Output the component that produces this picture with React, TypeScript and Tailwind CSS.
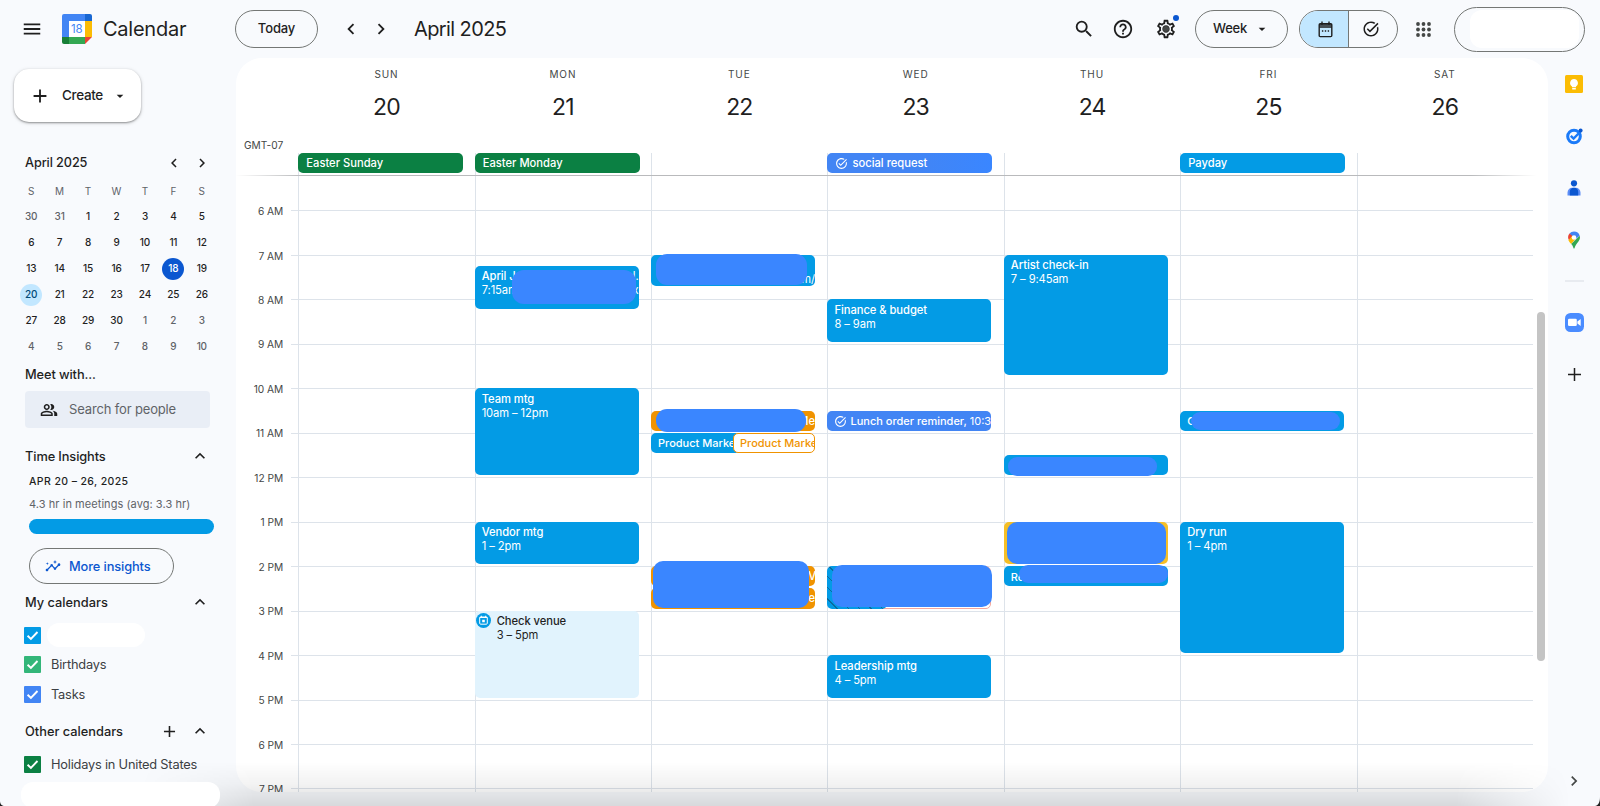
import { clsx } from 'clsx';
import type { ReactNode } from 'react';
import {
  MdAdd,
  MdArrowDropDown,
  MdChevronLeft,
  MdChevronRight,
  MdExpandLess,
  MdHelpOutline,
  MdInsights,
  MdMenu,
  MdOutlinePeopleAlt,
  MdOutlineSettings,
  MdSearch,
  MdTaskAlt,
} from 'react-icons/md';

const HOUR_H = 44.47;
const FIRST_LINE = 34.5; // offset of the 6 AM line inside the scroll area

const DAYS = [
  ['SUN', 20],
  ['MON', 21],
  ['TUE', 22],
  ['WED', 23],
  ['THU', 24],
  ['FRI', 25],
  ['SAT', 26],
] as const;

const HOURS = ['6 AM', '7 AM', '8 AM', '9 AM', '10 AM', '11 AM', '12 PM', '1 PM', '2 PM', '3 PM', '4 PM', '5 PM', '6 PM', '7 PM'];

const MINI_DAYS = [
  30, 31, 1, 2, 3, 4, 5,
  6, 7, 8, 9, 10, 11, 12,
  13, 14, 15, 16, 17, 18, 19,
  20, 21, 22, 23, 24, 25, 26,
  27, 28, 29, 30, 1, 2, 3,
  4, 5, 6, 7, 8, 9, 10,
];

interface CalEvent {
  day: number;
  start: number;
  end: number;
  title?: string;
  time?: string;
  color?: string;
  left?: number;
  width?: number;
  short?: boolean;
  icon?: 'task' | 'venue';
  tail?: ReactNode;
  // x, y, w, h of the block that hides the private part
  cover?: [number, number, number, number];
  coverRadius?: string;
}

const EVENTS: CalEvent[] = [
  {
    day: 1, start: 7.25, end: 8.25, title: 'April J', time: '7:15am', cover: [37.5, 3.5, 124, 34.5], coverRadius: 'rounded-[12px]',
    tail: <div className="absolute right-0 top-[3px] text-right leading-[14px]"><div>l.</div><div>x</div></div>,
  },
  { day: 1, start: 10, end: 12, title: 'Team mtg', time: '10am – 12pm' },
  { day: 1, start: 13, end: 14, title: 'Vendor mtg', time: '1 – 2pm' },
  { day: 1, start: 15, end: 17, title: 'Check venue', time: '3 – 5pm', color: 'bg-[#e1f3fd] text-[#1f1f1f]', icon: 'venue' },
  {
    day: 2, start: 7, end: 7.75, cover: [4.5, -1, 151, 31], coverRadius: 'rounded-[11px]',
    tail: <div className="absolute right-0 bottom-0 leading-[14px]">m/</div>,
  },
  {
    day: 2, start: 10.5, end: 11, color: 'bg-[#f09300] text-white', cover: [5, -1.5, 150, 22.5], coverRadius: 'rounded-[11px]',
    tail: <div className="absolute right-0 top-[3px] font-medium leading-[14px]">Me</div>,
  },
  { day: 2, start: 11, end: 11.5, title: 'Product Marke', width: 90, short: true },
  { day: 2, start: 11, end: 11.5, title: 'Product Marke', left: 82, width: 82, short: true, color: 'bg-white text-[#f09300] border border-[#f09300]' },
  {
    day: 2, start: 14, end: 14.5, color: 'bg-[#f09300] text-white',
    tail: <div className="absolute -right-px top-[3px] font-medium leading-[14px]">V</div>,
  },
  {
    day: 2, start: 14.5, end: 15, color: 'bg-[#f09300] text-white', cover: [1.5, -27.5, 156.5, 47], coverRadius: 'rounded-[10px]',
    tail: <div className="absolute right-0 top-[3px] font-medium leading-[14px]">Me</div>,
  },
  { day: 3, start: 8, end: 9, title: 'Finance & budget', time: '8 – 9am' },
  { day: 3, start: 10.5, end: 11, title: 'Lunch order reminder,', time: '10:3', short: true, icon: 'task', color: 'bg-[#4285f4] text-white' },
  { day: 3, start: 14, end: 15, left: 20, width: 143.8, color: 'bg-white border border-[#f4a79d]' },
  {
    day: 3, start: 14, end: 15, width: 60, cover: [5, -1.5, 159.5, 42], coverRadius: 'rounded-[10px]',
    color: 'bg-[repeating-linear-gradient(45deg,#039be5_0px,#039be5_7px,#0a6aa0_7px,#0a6aa0_8px)]',
  },
  { day: 3, start: 16, end: 17, title: 'Leadership mtg', time: '4 – 5pm' },
  { day: 4, start: 7, end: 9.75, title: 'Artist check-in', time: '7 – 9:45am' },
  { day: 4, start: 11.5, end: 12, cover: [4, 2, 149.5, 18.5], coverRadius: 'rounded-[9px]' },
  { day: 4, start: 13, end: 14, color: 'bg-[#f6bf26]', cover: [3.5, 0, 159, 42], coverRadius: 'rounded-[10px]' },
  { day: 4, start: 14, end: 14.5, title: 'Re', short: true, cover: [15.5, -1.5, 148.5, 18.5], coverRadius: 'rounded-[9px]' },
  { day: 5, start: 10.5, end: 11, title: 'C', short: true, cover: [10.5, 1.5, 149, 17.5], coverRadius: 'rounded-[9px]' },
  { day: 5, start: 13, end: 16, title: 'Dry run', time: '1 – 4pm' },
];

function EventBlock({ ev }: { ev: CalEvent }) {
  return (
    <div
      className="absolute"
      style={{
        top: FIRST_LINE + (ev.start - 6) * HOUR_H,
        height: (ev.end - ev.start) * HOUR_H - 2,
        left: ev.left ?? 0,
        width: ev.width ?? 164,
      }}
    >
      <div className={clsx('relative h-full overflow-hidden rounded-[5px] text-[11.2px] whitespace-nowrap', ev.color ?? 'bg-[#039be5] text-white')}>
        {ev.short ? (
          <div className={clsx('flex h-full items-center gap-[3px] pt-px text-[11px]', ev.left ? 'pl-[6px]' : 'pl-[7px]')}>
            {ev.icon === 'task' && <MdTaskAlt className="size-[13px] shrink-0" />}
            <span className="font-medium">{ev.title}</span>
            {ev.time && <span>{ev.time}</span>}
          </div>
        ) : (
          <div className={clsx('pt-[3.4px] leading-[14px]', ev.icon ? 'pl-[22px]' : 'pl-[7px]')}>
            <div className="font-medium tracking-[-0.05px]">{ev.title}</div>
            <div className="tracking-[-0.1px]">{ev.time}</div>
          </div>
        )}
        {ev.icon === 'venue' && (
          <svg viewBox="0 0 15 15" className="absolute left-[1.5px] top-[2px] size-[15px]">
            <circle cx="7.5" cy="7.5" r="7.5" fill="#039be5" />
            <rect x="3.7" y="4" width="7.6" height="7.2" rx="1" fill="none" stroke="#fff" />
            <path d="M3.7 4.5h7.6M5.3 2.7v1.6M9.7 2.7v1.6" stroke="#fff" />
            <path d="M6.2 6.7h2.6v2.6H6.2z" fill="#fff" />
          </svg>
        )}
        {ev.tail}
      </div>
      {ev.cover && (
        <div
          className={clsx('absolute bg-[#3a86ff]', ev.coverRadius)}
          style={{ left: ev.cover[0], top: ev.cover[1], width: ev.cover[2], height: ev.cover[3] }}
        />
      )}
    </div>
  );
}

function Logo() {
  return (
    <svg viewBox="0 0 30 30" className="ml-[19px] size-[30px]">
      <path d="M2 0h21v7H7v16H0V2a2 2 0 0 1 2-2z" fill="#4285f4" />
      <path d="M23 0h5a2 2 0 0 1 2 2v5h-7z" fill="#1967d2" />
      <path d="M23 7h7v16h-7z" fill="#fbbc04" />
      <path d="M7 23h16v7H7z" fill="#34a853" />
      <path d="M0 23h7v7H2a2 2 0 0 1-2-2z" fill="#188038" />
      <path d="M23 23h7l-7 7z" fill="#ea4335" />
      <path d="M7 7h16v16H7z" fill="#fff" />
      <text x="14.8" y="19.3" textAnchor="middle" fontSize="11.5" fill="#4285f4">18</text>
    </svg>
  );
}

function Header() {
  return (
    <header className="flex h-[58px] shrink-0 items-center pr-[15px] text-[#1f1f1f]">
      <MdMenu className="ml-[21px] size-[22px]" />
      <Logo />
      <span className="ml-[11px] w-[132px] text-[20px] tracking-[-0.25px]">Calendar</span>
      <button className="h-[38px] w-[83px] rounded-full border border-[#747775] text-[13px] font-medium tracking-[-0.15px]">Today</button>
      <MdChevronLeft className="ml-[22px] size-[22px]" />
      <MdChevronRight className="ml-[8px] size-[22px]" />
      <span className="ml-[22px] text-[20px] tracking-[-0.6px]">April 2025</span>
      <div className="ml-auto flex items-center">
        <MdSearch className="size-[22px]" />
        <MdHelpOutline className="ml-[17px] size-[22px]" />
        <div className="relative ml-[21px]">
          <MdOutlineSettings className="size-[22px]" />
          <span className="absolute left-[8px] top-[8px] size-[6px] rounded-full bg-[#444746]" />
          <span className="absolute -top-[3px] left-[18px] size-[6px] rounded-full bg-[#0b57d0]" />
        </div>
        <button className="ml-[18px] flex h-[38px] w-[93px] items-center rounded-full border border-[#747775] pl-[17px] text-[13px] font-medium tracking-[-0.25px]">
          <span className="w-[41px] text-left">Week</span>
          <MdArrowDropDown className="size-[16px]" />
        </button>
        <div className="ml-[11px] flex h-[38px] w-[99px] overflow-hidden rounded-full border border-[#747775]">
          <div className="flex w-[49px] items-center justify-center border-r border-[#747775] bg-[#c2e7ff] pl-[3px]">
            <svg viewBox="0 0 15 17" className="h-[17px] w-[15px]" fill="none" stroke="#1f1f1f" strokeWidth="1.4">
              <rect x="1.2" y="2.8" width="12.6" height="12.8" rx="1" />
              <path d="M1.2 4h12.6M1.2 6h12.6M4 .5v3M11 .5v3" />
              <path d="M3.9 10h1.4M6.8 10h1.4M9.7 10h1.4" />
            </svg>
          </div>
          <div className="flex flex-1 items-center justify-center pr-[4px]">
            <MdTaskAlt className="size-[18px]" />
          </div>
        </div>
        <svg viewBox="0 0 15 15" className="ml-[18px] size-[15px]" fill="#444746">
          {[2, 7.5, 13].map(y => [2, 7.5, 13].map(x => <circle key={`${x}-${y}`} cx={x} cy={y} r="1.9" />))}
        </svg>
        <div className="ml-[23px] flex h-[45px] w-[131px] items-center justify-end rounded-full border border-[#747775] pr-[5px]">
          <div className="h-[38px] w-[109px] rounded-[12px] bg-white" />
        </div>
      </div>
    </header>
  );
}

function MiniCalendar() {
  return (
    <div>
      <div className="flex h-[28px] items-center pl-[25px] text-[12.7px] font-medium tracking-[-0.1px]">
        <span className="w-[140px]">April 2025</span>
        <MdChevronLeft className="size-[18px]" />
        <MdChevronRight className="ml-[10px] size-[18px]" />
      </div>
      <div className="ml-[17px] mt-[1px] grid w-[199px] grid-cols-7 text-center text-[10px]">
        {['S', 'M', 'T', 'W', 'T', 'F', 'S'].map((d, i) => (
          <span key={i} className="flex h-[26px] items-center justify-center text-[#5f6368]">{d}</span>
        ))}
        {MINI_DAYS.map((d, i) => (
          <span key={i} className="flex h-[25.9px] items-center justify-center">
            <span
              className={clsx(
                'flex size-[22px] items-center justify-center rounded-full font-medium tracking-[-0.2px]',
                i === 19 && 'bg-[#0b57d0] text-white',
                i === 21 && 'bg-[#c2e7ff] text-[#004a77]',
                (i < 2 || i > 31) && 'text-[#5f6368]',
              )}
            >
              {d}
            </span>
          </span>
        ))}
      </div>
    </div>
  );
}

function Check({ color, children }: { color: string; children: ReactNode }) {
  return (
    <div className="flex h-[29.6px] items-center pl-[24px] text-[12.8px] tracking-[-0.2px] text-[#3c4043]">
      <span className={clsx('flex size-[17px] items-center justify-center rounded-[1px]', color)}>
        <svg viewBox="0 0 17 17" className="size-[17px]">
          <path d="M3.6 8.7l3.3 3.2 6.6-6.9" fill="none" stroke="#fff" strokeWidth="1.9" />
        </svg>
      </span>
      {children}
    </div>
  );
}

function Sidebar() {
  return (
    <aside className="flex w-[236px] shrink-0 flex-col text-[#1f1f1f]">
      <button className="ml-[14px] mt-[11px] flex h-[53px] w-[127px] shrink-0 items-center rounded-[15px] bg-white pl-[15px] text-[13.5px] font-medium shadow-[0_1px_2px_rgba(0,0,0,0.35),0_1px_4px_rgba(0,0,0,0.15)]">
        <MdAdd className="size-[22px]" />
        <span className="ml-[11px] w-[48px] text-left tracking-[-0.35px]">Create</span>
        <MdArrowDropDown className="ml-[2px] size-[16px]" />
      </button>
      <div className="mt-[27px]"><MiniCalendar /></div>
      <div className="mt-[7px] pl-[25px] text-[12.8px] font-medium leading-[17px] tracking-[-0.1px]">Meet with...</div>
      <div className="ml-[25px] mt-[8px] flex h-[37px] w-[185px] shrink-0 items-center rounded-[4px] bg-[#e9eef6] pl-[15px] text-[13px] tracking-[-0.15px] text-[#5f6368]">
        <MdOutlinePeopleAlt className="mr-[11px] size-[18px] text-[#1f1f1f]" />
        Search for people
      </div>
      <div className="mt-[18px] flex h-[20px] items-center justify-between pl-[25px] pr-[26px] text-[12.8px] font-medium tracking-[-0.1px]">
        Time Insights
        <MdExpandLess className="size-[20px]" />
      </div>
      <div className="ml-[29px] mt-[8px] text-[10.5px] font-medium leading-[16px] tracking-[0.4px]">APR 20 – 26, 2025</div>
      <div className="ml-[29px] mt-[6px] text-[11px] leading-[16px] tracking-[0.06px] text-[#5f6368]">4.3 hr in meetings (avg: 3.3 hr)</div>
      <div className="ml-[29px] mt-[7px] h-[15px] w-[185px] shrink-0 rounded-full bg-[#039be5]" />
      <button className="ml-[29px] mt-[14px] flex h-[36px] w-[145px] shrink-0 items-center rounded-full border border-[#747775] pl-[15px] text-[12.8px] font-medium tracking-[-0.1px] text-[#0b57d0]">
        <MdInsights className="mr-[8px] size-[16px]" />
        More insights
      </button>
      <div className="mb-[12px] mt-[8px] flex h-[20px] items-center justify-between pl-[25px] pr-[26px] text-[12.8px] font-medium">
        My calendars
        <MdExpandLess className="size-[20px]" />
      </div>
      <div className="-mt-[4px]">
        <Check color="bg-[#039be5]"><span className="ml-[6px] h-[24px] w-[98px] rounded-full bg-white" /></Check>
        <Check color="bg-[#33b679]"><span className="ml-[10px]">Birthdays</span></Check>
        <Check color="bg-[#4285f4]"><span className="ml-[10px]">Tasks</span></Check>
      </div>
      <div className="mt-[12px] flex h-[20px] items-center pl-[25px] pr-[26px] text-[12.8px] font-medium">
        <span className="mr-auto">Other calendars</span>
        <MdAdd className="mr-[11px] size-[19px]" />
        <MdExpandLess className="size-[20px]" />
      </div>
      <div className="mt-[9px]">
        <Check color="bg-[#0b8043]"><span className="ml-[10px]">Holidays in United States</span></Check>
      </div>
      <div className="relative z-20 ml-[21px] mt-[2px] h-[26px] w-[199px] shrink-0 rounded-[12px] bg-white" />
    </aside>
  );
}

function AllDayChip({ className, children }: { className: string; children: ReactNode }) {
  return (
    <div className={clsx('relative z-10 -ml-px flex h-[20px] w-[165px] items-center rounded-[5px] pl-[8px] text-[11.2px] font-medium text-white', className)}>
      {children}
    </div>
  );
}

function WeekGrid() {
  return (
    <main className="relative flex h-[734px] w-[1312px] shrink-0 flex-col overflow-hidden rounded-[26px] bg-white">
      <div className="flex h-[95px] shrink-0 pr-[15px]">
        <div className="flex w-[62.3px] items-end justify-end pr-[15px] text-[10.2px] leading-[15px] text-[#444746]">GMT-07</div>
        <div className="grid flex-1 grid-cols-7">
          {DAYS.map(([name, num]) => (
            <div key={name} className="flex flex-col items-center">
              <span className="mt-[8.4px] text-[10px] leading-[16px] tracking-[0.9px] text-[#444746]">{name}</span>
              <span className="mt-[9px] text-[23px] leading-[32px] tracking-[-0.9px] text-[#1f1f1f]">{num}</span>
            </div>
          ))}
        </div>
      </div>
      <div className="flex h-[22px] shrink-0 pr-[15px]">
        <div className="w-[62.3px]" />
        <div className="grid flex-1 grid-cols-7">
          <div className="border-l border-[#dde3ea]"><AllDayChip className="bg-[#0b8043]">Easter Sunday</AllDayChip></div>
          <div className="border-l border-[#dde3ea]"><AllDayChip className="bg-[#0b8043]">Easter Monday</AllDayChip></div>
          <div className="border-l border-[#dde3ea]" />
          <div className="border-l border-[#dde3ea]">
            <AllDayChip className="bg-linear-to-r from-[#4285f4] from-50% to-[#3a86ff]">
              <MdTaskAlt className="mr-[4px] size-[13px]" />
              social request
            </AllDayChip>
          </div>
          <div className="border-l border-[#dde3ea]" />
          <div className="border-l border-[#dde3ea]"><AllDayChip className="bg-[#039be5]">Payday</AllDayChip></div>
          <div className="border-l border-[#dde3ea]" />
        </div>
      </div>
      <div className="mr-[12px] h-px shrink-0 bg-[#b9babc] mask-x-from-95% mask-x-to-100%" />
      <div className="relative flex flex-1 overflow-hidden pr-[15px]">
        <div className="absolute inset-y-0 left-[55px] right-[15px]">
          <div className="h-[35.4px] border-b border-[#dde3ea]" />
          {HOURS.slice(1).map(h => (
            <div key={h} className="h-[44.47px] border-b border-[#dde3ea]" />
          ))}
        </div>
        <div className="w-[62.3px] shrink-0 pr-[15px] pt-[13.5px] text-right text-[10.2px] text-[#444746]">
          {HOURS.map(h => (
            <div key={h} className="flex h-[44.47px] items-center justify-end">{h}</div>
          ))}
        </div>
        <div className="relative grid flex-1 grid-cols-7">
          {DAYS.map(([name], day) => (
            <div key={name} className="relative border-l border-[#dde3ea]">
              <div className="absolute inset-y-0 -left-px">
                {EVENTS.filter(e => e.day === day).map((e, i) => <EventBlock key={i} ev={e} />)}
              </div>
            </div>
          ))}
        </div>
        <div className="absolute right-[3px] top-[136px] h-[349px] w-[8px] rounded-full bg-[#c4c4c4]" />
      </div>
    </main>
  );
}

function SideRail() {
  return (
    <aside className="flex flex-1 flex-col items-center">
      <svg viewBox="0 0 18 18" className="mt-[17px] size-[18px]">
        <rect width="18" height="18" rx="1.5" fill="#fbbc04" />
        <path d="M9 4a4 4 0 0 0-2 7.4v.9h4v-.9A4 4 0 0 0 9 4zM7.2 13h3.6v1.4H7.2z" fill="#fff" />
      </svg>
      <svg viewBox="0 0 18 18" className="mt-[34px] size-[18px]" fill="none">
        <circle cx="9" cy="9.5" r="6.3" stroke="#1a7af8" strokeWidth="3" />
        <path d="M5.8 8.8l2.8 2.8L16 4" stroke="#1a7af8" strokeWidth="2.4" />
        <circle cx="15.6" cy="3.4" r="2" fill="#0b57d0" />
      </svg>
      <svg viewBox="0 0 18 18" className="mt-[34px] size-[18px]">
        <circle cx="9" cy="4.3" r="3.1" fill="#0b57d0" />
        <path d="M2.5 16.5v-2.7c0-3 2-5 4.5-5h4c2.5 0 4.5 2 4.5 5v2.7z" fill="#5c8df6" />
        <path d="M4.8 16.5V13c0-2.5 1.5-4.2 4.2-4.2s4.2 1.7 4.2 4.2v3.5z" fill="#0b57d0" />
      </svg>
      <svg viewBox="0 0 18 18" className="mt-[34px] size-[18px]">
        <path d="M9 .5a6 6 0 0 1 5.7 4.2L9 9.5 4.5 2.6A6 6 0 0 1 9 .5z" fill="#4285f4" />
        <path d="M4.5 2.6 8 5.5 4.3 9.8A6 6 0 0 1 4.5 2.6z" fill="#ea4335" />
        <path d="M7.3 4.8 3.4 9.2c.6 1.3 1.7 2.5 2.8 3.9L10.5 8z" fill="#fbbc04" />
        <path d="M14.7 4.7c1.5 5-3.5 6.6-5.2 12.5-.1.4-.9.4-1 0-.4-1.7-1.3-3-2.3-4.1z" fill="#34a853" />
        <circle cx="9" cy="6.5" r="2.3" fill="#fff" />
      </svg>
      <div className="mt-[31px] h-[2px] w-[19px] bg-[#e8ebf0]" />
      <svg viewBox="0 0 19 19" className="mt-[31px] size-[19px]">
        <rect width="19" height="19" rx="5.5" fill="#4a8cff" />
        <rect x="3" y="5.8" width="8.8" height="7.2" rx="1.3" fill="#fff" />
        <path d="M12.4 8.4 15.7 6v6.9l-3.3-2.4z" fill="#fff" />
      </svg>
      <svg viewBox="0 0 13 13" className="mt-[36px] size-[13px]">
        <path d="M6.5 0v13M0 6.5h13" stroke="#1f1f1f" strokeWidth="1.5" />
      </svg>
      <MdChevronRight className="mt-auto mb-[15px] size-[20px] text-[#444746]" />
    </aside>
  );
}

export default function App() {
  return (
    <div className="relative flex h-[806px] w-[1600px] flex-col overflow-hidden bg-[#f8fafd] font-['Inter',sans-serif]">
      <Header />
      <div className="flex min-h-0 flex-1">
        <Sidebar />
        <WeekGrid />
        <SideRail />
      </div>
      {/* soft shade along the bottom edge */}
      <div className="pointer-events-none absolute bottom-0 left-[140px] right-[30px] h-[44px] bg-linear-to-t from-black/13 via-black/5 to-transparent mask-x-from-92% mask-x-to-100%" />
      <svg viewBox="0 0 5 5" className="absolute bottom-0 left-0 size-[5px]">
        <path d="M0 0c0 3 2 5 5 5H0z" fill="#222" />
      </svg>
      <svg viewBox="0 0 5 5" className="absolute bottom-0 right-0 h-[9px] w-[5px]" preserveAspectRatio="none">
        <path d="M5 0c0 3-2 5-5 5h5z" fill="#222" />
      </svg>
    </div>
  );
}
